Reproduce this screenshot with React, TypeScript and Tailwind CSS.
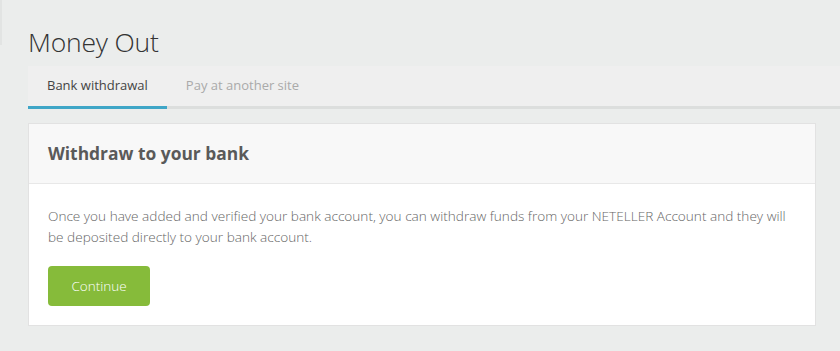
import React, { useState } from 'react';

const tabs = ['Bank withdrawal', 'Pay at another site'];

export default function App() {
  const [active, setActive] = useState(0);

  return (
    <div className="min-h-[351px] bg-[#ebedec] font-['Open_Sans',sans-serif] pl-[28px] pt-[24px] pb-[24px]">
      <div className="absolute left-0 top-0 h-[45px] w-[2px] bg-[#e2e4e3]" />
      <h1 className="text-[26.5px] leading-[36px] font-light text-[#333] tracking-[-0.2px]">Money Out</h1>

      {/* Tabs */}
      <div className="mt-[6px] flex bg-[#efefef] border-b-[3px] border-[#dcdedd]">
        {tabs.map((t, i) => (
          <button
            key={t}
            onClick={() => setActive(i)}
            className={
              'relative h-[40px] px-[19px] text-[13px] ' +
              (active === i ? 'text-[#444]' : 'text-[#aaa]')
            }
          >
            {t}
            {active === i && <span className="absolute left-0 right-0 -bottom-[3px] h-[3px] bg-[#3fa6c7]" />}
          </button>
        ))}
      </div>

      {/* Card */}
      <div className="mt-[14px] mr-[24px] bg-white border border-[#e2e2e2]">
        <div className="h-[60px] flex items-center px-[19px] bg-[#f8f8f8] border-b border-[#e8e8e8]">
          <h2 className="text-[17.4px] font-bold text-[#5a5a5a]">Withdraw to your bank</h2>
        </div>
        <div className="px-[19px] pt-[21px] pb-[19px]">
          <p className="text-[13.6px] leading-[21px] text-[#666] font-light">
            Once you have added and verified your bank account, you can withdraw funds from your NETELLER Account and they will be deposited directly to your bank account.
          </p>
          <button className="mt-[19px] w-[102px] h-[40px] rounded-[4px] bg-[#86bb3a] text-white text-[13.5px] font-light">
            Continue
          </button>
        </div>
      </div>
    </div>
  );
}
